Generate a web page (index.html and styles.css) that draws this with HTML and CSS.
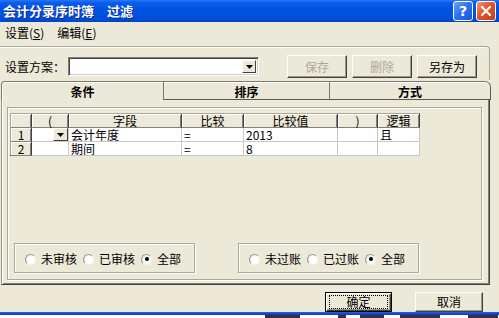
FILE: index.html
```html
<!DOCTYPE html>
<html>
<head>
<meta charset="utf-8">
<link rel="stylesheet" href="styles.css">
</head>
<body>
<div class="win">
  <div class="titlebar">
    <div class="title">会计分录序时簿<span class="title-b">过滤</span></div>
    <div class="tbtns">
      <span class="tb help">?</span>
      <span class="tb close"><svg width="12" height="12" viewBox="0 0 12 12"><path d="M2 2 L10 10 M10 2 L2 10" stroke="#fff" stroke-width="2.2" stroke-linecap="round"/></svg></span>
    </div>
  </div>
  <div class="menubar">
    <span>设置(<u>S</u>)</span>
    <span>编辑(<u>E</u>)</span>
  </div>
  <div class="toolbar">
    <span class="lbl">设置方案：</span>
    <div class="combo"><div class="combo-field"></div><div class="combo-btn"><svg width="7" height="4" viewBox="0 0 7 4"><path d="M0 0H7L3.5 4Z" fill="#000"/></svg></div></div>
    <div class="tbuttons">
      <button class="btn disabled">保存</button>
      <button class="btn disabled">删除</button>
      <button class="btn">另存为</button>
    </div>
  </div>
  <div class="tabs">
    <div class="tab sel">条件</div>
    <div class="tab mid">排序</div>
    <div class="tab last">方式</div>
  </div>
  <div class="panel">
    <div class="inner">
      <div class="grid">
        <div class="h rh"></div><div class="h">(</div><div class="h">字段</div><div class="h">比较</div><div class="h">比较值</div><div class="h">)</div><div class="h">逻辑</div>
        <div class="rh">1</div><div class="c dd"><span class="ddbtn"><svg width="7" height="4" viewBox="0 0 7 4"><path d="M0 0H7L3.5 4Z" fill="#000"/></svg></span></div><div class="c">会计年度</div><div class="c">=</div><div class="c">2013</div><div class="c"></div><div class="c">且</div>
        <div class="rh">2</div><div class="c"></div><div class="c">期间</div><div class="c">=</div><div class="c">8</div><div class="c"></div><div class="c"></div>
      </div>
      <div class="groups">
        <div class="gbox">
          <div class="ritem"><span class="radio"></span>未审核</div>
          <div class="ritem"><span class="radio"></span>已审核</div>
          <div class="ritem"><span class="radio on"></span>全部</div>
        </div>
        <div class="gbox">
          <div class="ritem"><span class="radio"></span>未过账</div>
          <div class="ritem"><span class="radio"></span>已过账</div>
          <div class="ritem"><span class="radio on"></span>全部</div>
        </div>
      </div>
    </div>
  </div>
  <div class="footer">
    <button class="btn def"><span class="focus">确定</span></button>
    <button class="btn cancel">取消</button>
  </div>
  <div class="frame-bottom"></div>
  <div class="behind">
    <span class="frag f1"></span><span class="frag f2"></span><span class="frag f3"></span><span class="frag f4"></span><span class="frag f5"></span>
  </div>
</div>
</body>
</html>
```

FILE: styles.css
```css
* { box-sizing: border-box; margin: 0; padding: 0; }
html, body { width: 499px; height: 318px; overflow: hidden; }
body {
  background: #ECE9D8;
  font: 12px/14px "Noto Sans CJK SC", "Noto Sans", sans-serif;
  color: #000;
}
.win { display: flex; flex-direction: column; width: 499px; height: 318px; }

/* title bar */
.titlebar {
  height: 22px;
  flex: none;
  display: flex;
  align-items: center;
  justify-content: space-between;
  padding: 0 3px 0 3px;
  background: linear-gradient(#2a78f6 0%, #0a5ced 12%, #0054e3 40%, #0050dc 80%, #0044c8 100%);
}
.title {
  color: #fff;
  font-weight: 700;
  font-size: 13px;
  line-height: 16px;
  text-shadow: 1px 1px 0 #0a2a8a;
  white-space: nowrap;
}
.title-b { margin-left: 13px; }
.tbtns { display: flex; gap: 3px; }
.tb {
  width: 20px; height: 20px;
  border: 1px solid #fff;
  border-radius: 3px;
  display: flex; align-items: center; justify-content: center;
  color: #fff;
  font: 700 14px/14px "DejaVu Sans", sans-serif;
}
.help { background: linear-gradient(135deg, #6ea2f8 0%, #2b6ff0 50%, #1a55d8 100%); }
.close { background: linear-gradient(135deg, #f09a7a 0%, #e0532c 45%, #c83e18 100%); }

/* menu */
.menubar {
  height: 24px;
  flex: none;
  display: flex;
  gap: 13px;
  padding: 4px 0 0 5px;
}

/* toolbar */
.toolbar {
  height: 34px;
  width: 490px;
  flex: none;
  display: flex;
  align-items: center;
  padding: 6px 0 0 5px;
  border-top: 1px solid #aca899;
  border-right: 1px solid #aca899;
  border-top-right-radius: 4px;
  box-shadow: inset 0 1px 0 #fff;
}
.lbl { width: 63px; }
.combo {
  width: 191px; height: 19px;
  display: flex;
  background: #fff;
  border: 1px solid;
  border-color: #808080 #fff #fff #808080;
  box-shadow: inset 1px 1px 0 #404040, inset -1px -1px 0 #d4d0c8;
  padding: 2px 2px 2px 2px;
}
.combo-field { flex: 1; }
.combo-btn {
  width: 14px; height: 13px;
  background: #ECE9D8;
  border: 1px solid;
  border-color: #fff #404040 #404040 #fff;
  display: flex; align-items: center; justify-content: center;
}
.tbuttons { display: flex; gap: 5px; margin-left: 28px; }
.btn {
  width: 60px; height: 23px;
  background: #ECE9D8;
  border: 1px solid;
  border-color: #fff #404040 #404040 #fff;
  box-shadow: inset -1px -1px 0 #9d9a8c;
  font: 12px/14px "Noto Sans CJK SC", "Noto Sans", sans-serif;
  color: #000;
}
.btn.disabled { color: #aca899; }

/* tabs */
.tabs {
  height: 20px;
  flex: none;
  display: flex;
  padding: 1px 0 0 1px;
}
.tab {
  height: 19px;
  text-align: center;
  font-weight: 700;
  padding-top: 3px;
  border-top: 1px solid #7a786c;
  box-shadow: inset 0 1px 0 #fff;
}
.tab.sel {
  width: 162px;
  border-left: 1px solid #7a786c;
  border-top-left-radius: 4px;
  box-shadow: inset 1px 1px 0 #fff;
}
.tab.mid {
  width: 166px;
  border-left: 1px solid #7a786c;
  border-bottom: 1px solid #5a5850;
}
.tab.last {
  width: 162px;
  border-left: 1px solid #7a786c;
  border-right: 1px solid #5a5850;
  border-bottom: 1px solid #5a5850;
  border-top-right-radius: 6px;
}

/* panel */
.panel {
  height: 185px;
  width: 489px;
  flex: none;
  margin-left: 1px;
  border-left: 1px solid #9a988c;
  border-right: 1px solid #404040;
  border-bottom: 1px solid #404040;
  box-shadow: inset 1px 0 0 #fff, inset -1px -1px 0 #808080;
  padding: 7px 0 0 5px;
}
.inner {
  width: 475px;
  height: 173px;
  border: 1px solid #aca899;
  box-shadow: inset 1px 1px 0 #fff, 1px 1px 0 #fff;
  padding: 5px 0 0 2px;
}

/* grid */
.grid {
  display: grid;
  grid-template-columns: 21px 37px 113px 62px 94px 40px 42px;
  grid-template-rows: 14px 14px 14px;
  width: 410px;
  height: 43px;
  border-top: 1px solid #aca899;
  border-left: 1px solid #aca899;
  border-right: 1px solid #000;
  border-bottom: 1px solid #000;
  background: #fff;
  font-size: 12px;
}
.grid > div { line-height: 13px; white-space: nowrap; }
.h {
  background: #ECE9D8;
  text-align: center;
  border-right: 1px solid #404040;
  border-bottom: 1px solid #808080;
  box-shadow: inset 1px 1px 0 #fff, inset -1px 0 0 #808080;
}
.rh {
  background: #ECE9D8;
  text-align: center;
  border-right: 1px solid #404040;
  border-bottom: 1px solid #808080;
  box-shadow: inset 1px 1px 0 #fff, inset -1px 0 0 #808080;
}
.c {
  padding-left: 2px;
  border-right: 1px solid #c8c8c8;
  border-bottom: 1px solid #c8c8c8;
}
.c.dd { display: flex; justify-content: flex-end; padding: 0; }
.ddbtn {
  width: 15px; height: 13px;
  background: #ECE9D8;
  border: 1px solid;
  border-color: #fff #404040 #404040 #fff;
  display: flex; align-items: center; justify-content: center;
}

/* radio groups */
.groups {
  display: flex;
  gap: 43px;
  margin: 87px 0 0 4px;
}
.gbox {
  width: 181px;
  height: 30px;
  border: 1px solid #aca899;
  box-shadow: inset 1px 1px 0 #fff, 1px 1px 0 #fff;
  display: flex;
  align-items: center;
  padding: 2px 0 0 10px;
}
.ritem { width: 58px; display: flex; align-items: center; gap: 5px; flex: none; white-space: nowrap; }
.radio {
  width: 11px; height: 11px;
  border-radius: 50%;
  background: radial-gradient(circle at 60% 60%, #fff 45%, #f2f0e6 70%);
  border: 1px solid;
  border-color: #9a988c #f4f3ee #f4f3ee #9a988c;
  display: flex; align-items: center; justify-content: center;
  flex: none;
}
.radio.on::after {
  content: "";
  width: 4px; height: 4px;
  border-radius: 50%;
  background: #000;
}

/* footer */
.footer {
  height: 27px;
  flex: none;
  display: flex;
  gap: 23px;
  padding: 7px 0 0 325px;
}
.footer .btn { height: 20px; }
.btn.def {
  width: 67px;
  border: 1px solid #000;
  box-shadow: inset 1px 1px 0 #fff, inset -1px -1px 0 #404040, inset -2px -2px 0 #9d9a8c;
  padding: 2px 3px;
}
.focus {
  display: block;
  height: 14px;
  border: 1px dotted #000;
  line-height: 12px;
}
.btn.cancel { width: 68px; }

.frame-bottom {
  height: 3px;
  flex: none;
  background: linear-gradient(#2a5fe0, #0831d9);
}
.behind {
  height: 3px;
  flex: none;
  background: #fff;
  display: flex;
  padding-left: 265px;
}
.frag { height: 3px; background: #333; }
.f1 { width: 35px; }
.f2 { width: 8px; margin-left: 38px; }
.f3 { width: 24px; margin-left: 14px; }
.f4 { width: 40px; margin-left: 16px; }
.f5 { width: 30px; margin-left: 28px; }
```
